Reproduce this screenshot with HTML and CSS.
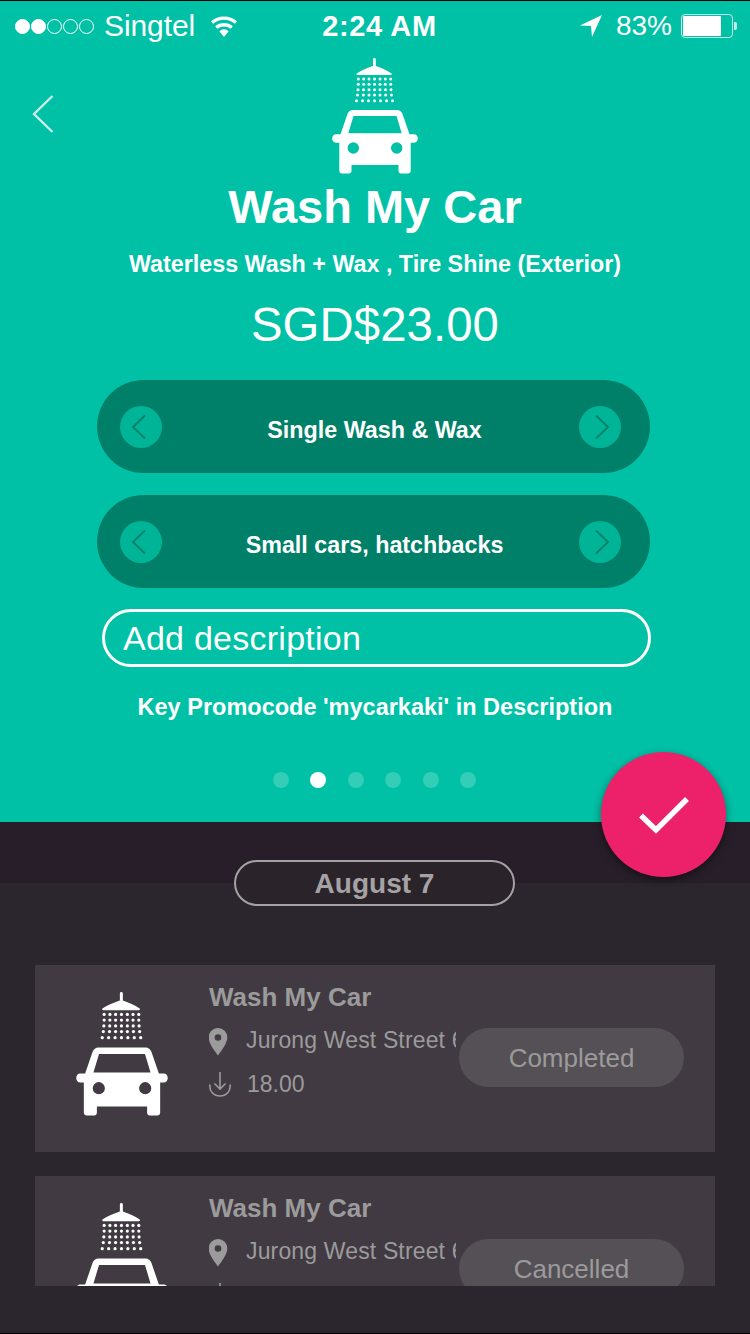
FILE: index.html
```html
<!DOCTYPE html>
<html lang="en">
<head>
<meta charset="utf-8">
<title>Wash My Car</title>
<link rel="stylesheet" href="styles.css">
</head>
<body>
<svg class="defs" width="0" height="0" aria-hidden="true">
  <symbol id="carwash" viewBox="0 0 86 116">
    <path d="M41 1.500a1.400 1.400 0 0 1 2.800 0V8c6 2 11 4.500 15.500 7.200.9.6.5 1.800-.5 1.800H25.500c-1 0-1.400-1.200-.5-1.800C29.500 12.500 35 10 41 8z" fill="#fff"/>
    <g fill="#fff">
      <g><circle cx="26.300" cy="21" r="1.500"/><circle cx="31.700" cy="21" r="1.500"/><circle cx="37" cy="21" r="1.500"/><circle cx="42.500" cy="21" r="1.500"/><circle cx="48" cy="21" r="1.500"/><circle cx="53.300" cy="21" r="1.500"/><circle cx="58.700" cy="21" r="1.500"/></g>
      <g><circle cx="26.300" cy="26.300" r="1.500"/><circle cx="31.700" cy="26.300" r="1.500"/><circle cx="37" cy="26.300" r="1.500"/><circle cx="42.500" cy="26.300" r="1.500"/><circle cx="48" cy="26.300" r="1.500"/><circle cx="53.300" cy="26.300" r="1.500"/><circle cx="58.700" cy="26.300" r="1.500"/></g>
      <g><circle cx="26" cy="31.700" r="1.500"/><circle cx="31.500" cy="31.700" r="1.500"/><circle cx="37" cy="31.700" r="1.500"/><circle cx="42.500" cy="31.700" r="1.500"/><circle cx="48" cy="31.700" r="1.500"/><circle cx="53.500" cy="31.700" r="1.500"/><circle cx="59" cy="31.700" r="1.500"/></g>
      <g><circle cx="25.500" cy="37" r="1.500"/><circle cx="31.300" cy="37" r="1.500"/><circle cx="37" cy="37" r="1.500"/><circle cx="42.500" cy="37" r="1.500"/><circle cx="48" cy="37" r="1.500"/><circle cx="53.700" cy="37" r="1.500"/><circle cx="59.500" cy="37" r="1.500"/></g>
      <g><circle cx="24.500" cy="42.700" r="1.500"/><circle cx="30.500" cy="42.700" r="1.500"/><circle cx="36.500" cy="42.700" r="1.500"/><circle cx="42.500" cy="42.700" r="1.500"/><circle cx="48.500" cy="42.700" r="1.500"/><circle cx="54.500" cy="42.700" r="1.500"/><circle cx="60.500" cy="42.700" r="1.500"/></g>
    </g>
    <path fill-rule="evenodd" fill="#fff" d="M21 52h44c2.600 0 4.500 1.500 5.500 4l7 20.300H82c2.300 0 3.800 1.900 3.800 4.200s-1.500 4.200-3.800 4.200h-3.300V113c0 1.500-1.200 2.500-2.700 2.500h-7c-1.500 0-2.500-1-2.500-2.500v-6H19.500v6c0 1.500-1 2.500-2.500 2.500h-7c-1.500 0-2.700-1-2.700-2.500V84.700H4c-2.300 0-3.800-1.900-3.800-4.200S1.700 76.300 4 76.300h4.500l7-20.300c1-2.500 2.900-4 5.500-4zM21.500 58 16.300 75.300h53.400L64.500 58zM21.300 84.300a5.700 5.700 0 1 0 0 11.400 5.700 5.700 0 0 0 0-11.400zM64.700 84.300a5.700 5.700 0 1 0 0 11.400 5.700 5.700 0 0 0 0-11.400z"/>
  </symbol>
  <symbol id="chev-left" viewBox="0 0 42 42">
    <path d="M25 9.500 13 21l12 11.500" fill="none" stroke="#07836d" stroke-width="2"/>
  </symbol>
  <symbol id="chev-right" viewBox="0 0 42 42">
    <path d="M17 9.500 29 21 17 32.500" fill="none" stroke="#07836d" stroke-width="2"/>
  </symbol>
  <symbol id="pin" viewBox="0 0 20 28">
    <path fill-rule="evenodd" fill="#9b9b9b" d="M10 0a9.300 9.300 0 0 1 9.300 9.500C19.300 15 14 22 10 27.500 6 22 .7 15 .7 9.500A9.300 9.300 0 0 1 10 0zm0 6.200a3.300 3.300 0 1 0 0 6.600 3.300 3.300 0 0 0 0-6.600z"/>
  </symbol>
  <symbol id="tip" viewBox="0 0 24 26">
    <path d="M12 1v17M6.500 12.500 12 18l5.500-5.500M2 13.500C.8 20 6 25 12 25s11.200-5 10-11.500" fill="none" stroke="#9b9b9b" stroke-width="1.600"/>
  </symbol>
</svg>

<main class="phone">
  <section class="hero">
    <div class="status">
      <div class="status-left">
        <span class="sig on"></span><span class="sig on"></span><span class="sig"></span><span class="sig"></span><span class="sig"></span>
        <span class="carrier">Singtel</span>
        <svg class="wifi" width="28" height="22" viewBox="0 0 28 22"><path d="M14 22 9.300 16.200a7.500 7.500 0 0 1 9.400 0z" fill="#fff"/><path d="M6.300 12.500a12 12 0 0 1 15.400 0M2 7.500a18.500 18.500 0 0 1 24 0" fill="none" stroke="#fff" stroke-width="3.400"/></svg>
      </div>
      <div class="time">2:24 AM</div>
      <div class="status-right">
        <svg class="arrow" width="22" height="22" viewBox="0 0 22 22"><path d="M22 0 0 10.500l11 .5 1 11z" fill="#fff"/></svg>
        <span class="pct">83%</span>
        <span class="battery"><span class="battery-fill"></span></span>
        <span class="battery-tip"></span>
      </div>
    </div>

    <div class="top">
      <a class="back" aria-label="Back"><svg width="22" height="38" viewBox="0 0 22 38"><path d="M20.500 1 2 19l18.500 18" fill="none" stroke="#cdeee8" stroke-width="2.400"/></svg></a>
      <svg class="logo"><use href="#carwash"/></svg>
    </div>

    <h1 class="title">Wash My Car</h1>
    <p class="subtitle">Waterless Wash + Wax , Tire Shine (Exterior)</p>
    <p class="price">SGD$23.00</p>

    <div class="picker">
      <span class="step"><svg><use href="#chev-left"/></svg></span>
      <span class="picker-label">Single Wash &amp; Wax</span>
      <span class="step"><svg><use href="#chev-right"/></svg></span>
    </div>
    <div class="picker">
      <span class="step"><svg><use href="#chev-left"/></svg></span>
      <span class="picker-label">Small cars, hatchbacks</span>
      <span class="step"><svg><use href="#chev-right"/></svg></span>
    </div>

    <div class="desc">Add description</div>
    <p class="promo">Key Promocode 'mycarkaki' in Description</p>

    <div class="pager">
      <span class="dot"></span><span class="dot active"></span><span class="dot"></span><span class="dot"></span><span class="dot"></span><span class="dot"></span>
    </div>

    <button class="fab" aria-label="Confirm"><svg width="52" height="40" viewBox="0 0 52 40"><path d="M3 20.500 18 35 49 4" fill="none" stroke="#fff" stroke-width="5.500"/></svg></button>
  </section>

  <section class="history">
    <div class="band"></div>
    <div class="date">August 7</div>
    <div class="list">
      <article class="card">
        <svg class="card-icon"><use href="#carwash"/></svg>
        <div class="info">
          <h2 class="card-title">Wash My Car</h2>
          <div class="meta"><svg class="pin"><use href="#pin"/></svg><span class="addr">Jurong West Street 64</span></div>
          <div class="meta"><svg class="tip"><use href="#tip"/></svg><span class="amount">18.00</span></div>
        </div>
        <span class="state">Completed</span>
      </article>
      <article class="card">
        <svg class="card-icon"><use href="#carwash"/></svg>
        <div class="info">
          <h2 class="card-title">Wash My Car</h2>
          <div class="meta"><svg class="pin"><use href="#pin"/></svg><span class="addr">Jurong West Street 64</span></div>
          <div class="meta"><svg class="tip"><use href="#tip"/></svg><span class="amount">23.00</span></div>
        </div>
        <span class="state">Cancelled</span>
      </article>
    </div>
  </section>
</main>
</body>
</html>
```
FILE: styles.css
```css
* { box-sizing: border-box; }
html, body { margin: 0; padding: 0; background: #000; }
body { font-family: "Liberation Sans", Arial, sans-serif; color: #fff; }
.defs { position: absolute; }
.phone {
  width: 750px; height: 1334px; overflow: hidden;
  display: flex; flex-direction: column;
  border-top: 1px solid #000; border-bottom: 1px solid #000;
}
.hero {
  position: relative; height: 821px; flex: none;
  background: #00c1a6;
  display: flex; flex-direction: column; align-items: center;
}
.status {
  width: 100%; height: 50px; flex: none;
  display: flex; align-items: center; justify-content: space-between;
  padding: 0 13px 0 15px; font-size: 28px;
}
.status-left, .status-right { display: flex; align-items: center; width: 290px; }
.status-right { justify-content: flex-end; }
.sig { width: 15px; height: 15px; border-radius: 50%; border: 1.500px solid #fff; margin-right: 1px; }
.sig.on { background: #fff; }
.carrier { margin-left: 9px; font-size: 30px; letter-spacing: -0.100px; }
.wifi { margin-left: 15px; }
.time { font-weight: 700; font-size: 29px; letter-spacing: 0.600px; margin-left: 7px; }
.arrow { margin-right: 14px; }
.pct { margin-right: 9px; }
.battery { width: 52px; height: 24px; border: 1.500px solid #bff0e7; border-radius: 4px; padding: 1px; display: flex; }
.battery-fill { width: 38px; background: #fff; border-radius: 1px; }
.battery-tip { width: 3px; height: 8px; margin-left: 1px; background: #bff0e7; border-radius: 0 2px 2px 0; }

.top { width: 100%; display: grid; grid-template-columns: 1fr 86px 1fr; margin-top: 7px; height: 116px; flex: none; }
.back { margin: 37px 0 0 32px; display: block; }
.logo { width: 86px; height: 116px; display: block; }

.title { margin: 5px 0 0; font-size: 47px; line-height: 56px; font-weight: 700; }
.subtitle { margin: 16px 0 0; font-size: 23.300px; line-height: 26px; font-weight: 700; }
.price { margin: 20px 0 0; font-size: 47.300px; line-height: 56px; letter-spacing: 0.100px; }

.picker {
  width: 553px; height: 93px; flex: none; align-self: flex-start; margin-left: 97px;
  border-radius: 47px; background: #008069;
  display: flex; align-items: center; justify-content: space-between;
  padding: 0 29px 0 23px; margin-top: 22px;
}
.price + .picker { margin-top: 27px; }
.step { width: 42px; height: 42px; border-radius: 50%; background: #00b498; flex: none; }
.step svg { width: 42px; height: 42px; display: block; }
.picker-label { font-size: 23.300px; font-weight: 700; position: relative; top: 4px; left: 4px; }

.desc {
  width: 549px; height: 58px; flex: none; align-self: flex-start; margin: 21px 0 0 102px;
  border: 3px solid #fff; border-radius: 29px;
  font-size: 34px; letter-spacing: 0.250px; line-height: 52px; padding-left: 18px;
}
.promo { margin: 27px 0 0; font-size: 23.500px; line-height: 26px; font-weight: 700; }

.pager { display: flex; gap: 21.500px; margin-top: 52px; margin-left: -1px; }
.dot { width: 16px; height: 16px; border-radius: 50%; background: #33cdb8; }
.dot.active { background: #fff; }

.fab {
  position: absolute; left: 601px; top: 751px; z-index: 2;
  width: 125px; height: 125px; border-radius: 50%; border: 0; padding: 0;
  background: #ec2169; box-shadow: 0 3px 8px rgba(0,0,0,.45);
  display: flex; align-items: center; justify-content: center;
}

.history { flex: 1; background: #2b262d; display: flex; flex-direction: column; min-height: 0; }
.band { height: 61px; flex: none; background: #271e29; }
.date {
  width: 281px; height: 46px; flex: none; margin: -23px 0 0 234px; position: relative;
  border: 2px solid #a5a2a6; border-radius: 23px; background: #2a2329;
  color: #a5a2a6; font-size: 28px; font-weight: 700; line-height: 44px; text-align: center;
}
.list { margin: 59px 35px 47px; flex: 1; min-height: 0; overflow: hidden; display: flex; flex-direction: column; gap: 24px; }
.card {
  height: 187px; flex: none; background: #413a42;
  display: flex; align-items: flex-start; padding: 19px 31px 0 41px;
}
.card-icon { width: 92px; height: 124px; flex: none; margin-top: 8px; }
.info { width: 247px; flex: none; margin-left: 41px; }
.card-title { margin: 0; font-size: 26px; line-height: 26px; font-weight: 700; color: #9b9b9b; }
.meta { display: flex; align-items: center; height: 44px; color: #9b9b9b; font-size: 23px; white-space: nowrap; overflow: hidden; }
.card-title + .meta { margin-top: 8px; }
.pin { width: 20px; height: 28px; flex: none; margin: 4px 18px 0 -1px; }
.tip { width: 24px; height: 26px; flex: none; margin-right: 15px; margin-left: -1px; }
.addr { letter-spacing: 0.150px; }
.state {
  width: 225px; height: 59px; flex: none; margin: 44px 0 0 3px;
  border-radius: 30px; background: #555056; color: #9b9b9b;
  font-size: 26px; line-height: 60px; text-align: center;
}
```
